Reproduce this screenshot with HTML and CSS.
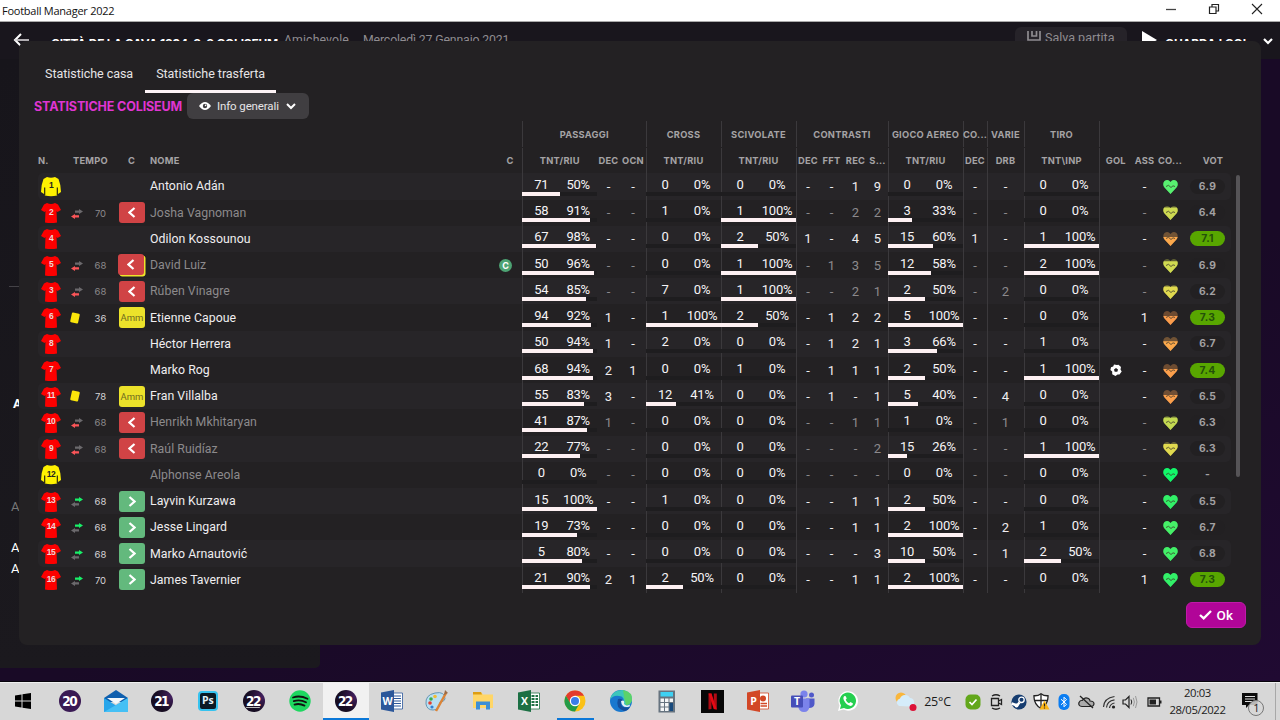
FILE: index.html
```html
<!DOCTYPE html>
<html lang="it">
<head>
    <meta charset="UTF-8">
    <title>Football Manager 2022</title>
    <link rel="stylesheet" href="styles.css">
</head>
<body>

<!-- Shared shapes -->
<svg class="defs" width="0" height="0">
    <symbol id="shirt" viewBox="0 0 20 21">
        <path d="M6 1 Q10 3 14 1 L17 2.5 L20 8 L16.5 10 L15.5 9 L16 20.5 Q10 21.5 4 20.5 L4.5 9 L3.5 10 L0 8 L3 2.5 Z" fill="#fd0000"/>
    </symbol>
    <symbol id="keeper" viewBox="0 0 20 21">
        <path d="M6 1 Q10 2.5 14 1 L17.5 3 Q20 9 20 16 L17 18 L16 19.5 Q10 21 4 19.5 L3 18 L0 16 Q0 9 2.5 3 Z" fill="#fff200"/>
        <path d="M3.7 11.5 V19 M16.3 11.5 V19" stroke="#1b1a10" stroke-width="1.1"/>
    </symbol>
    <symbol id="ball" viewBox="0 0 12 12">
        <path d="M4 .5 L7 1 L8.5 .8 L11 3 L10.5 5.5 L11.7 7.5 L9.5 10.5 L7.5 10.4 L5.5 12 L2.2 10.2 L2.2 7.6 L.4 6 L1 3.2 L3.2 2.6 Z" fill="#fff"/>
        <path d="M6 3.9 L8 5.4 L7.3 7.7 H4.7 L4 5.4 Z" fill="#232123"/>
    </symbol>
</svg>

<div class="titlebar">
    <span>Football Manager 2022</span>
    <div class="window-buttons">
        <svg width="12" height="12"><path d="M1 6.5 H11" stroke="#444" stroke-width="1.3"/></svg>
        <svg width="12" height="12"><path d="M1.5 4 H8 V10.5 H1.5 Z M4 4 V1.5 H10.5 V8 H8" fill="none" stroke="#222" stroke-width="1.2"/></svg>
        <svg width="12" height="12"><path d="M1 1 L11 11 M11 1 L1 11" stroke="#222" stroke-width="1.1"/></svg>
    </div>
</div>

<div class="app">
    <div class="topbar">
        <svg class="back" width="17" height="14"><path d="M8 1 L2 7 L8 13" fill="none" stroke="#fff" stroke-width="2"/><path d="M2 7 H16" stroke="#d8d6d8" stroke-width="1.6"/></svg>
        <span class="match">CITTÀ DE LA CAVA 1394 &nbsp;8-8 COLISEUM</span>
        <span class="info">Amichevole</span>
        <span class="info date">Mercoledì 27 Gennaio 2021</span>
        <div class="save">
            <svg width="14" height="14"><path d="M1 0 V9 H13 V0 M5 0 V5 H9.500 V0" fill="none" stroke="#8f8c90" stroke-width="1.7"/></svg>
            <span>Salva partita</span>
        </div>
        <svg class="play" width="15" height="18"><path d="M0 0 L15 9 L0 18 Z" fill="#fff"/></svg>
        <span class="watch">GUARDA I GOL</span>
        <svg class="more" width="10" height="7"><path d="M1 1 L5 5 L9 1" fill="none" stroke="#fff" stroke-width="2.2"/></svg>
    </div>
    <div class="side-panel">
        <hr>
        <p class="strong">A</p>
        <p class="muted">A</p>
        <p>A</p>
        <p>A</p>
    </div>

    <div class="modal">
        <div class="tabs">
            <span class="tab">Statistiche casa</span>
            <span class="tab active">Statistiche trasferta</span>
        </div>
        <div class="toolbar">
            <h2>STATISTICHE COLISEUM</h2>
            <div class="view-select">
                <svg width="12" height="8" viewBox="0 0 12 8"><path d="M0 4 Q6 -4 12 4 Q6 12 0 4" fill="#fff"/><circle cx="6" cy="4" r="2.2" fill="#403e41"/><circle cx="6.6" cy="3.4" r=".8" fill="#fff"/></svg>
                <span>Info generali</span>
                <svg width="10" height="7"><path d="M1 1 L5 5 L9 1" fill="none" stroke="#fff" stroke-width="2"/></svg>
            </div>
        </div>

        <div class="stats">
            <div class="grid groups">
                <span class="blank"></span>
                <span class="span3 line">PASSAGGI</span>
                <span class="line">CROSS</span>
                <span class="line">SCIVOLATE</span>
                <span class="span4 line">CONTRASTI</span>
                <span class="line">GIOCO AEREO</span>
                <span class="line">CO...</span>
                <span class="line">VARIE</span>
                <span class="line">TIRO</span>
                <span class="span4 line"></span>
            </div>
            <div class="grid heads">
                <span class="left">N.</span>
                <span class="tempo">TEMPO</span>
                <span>C</span>
                <span class="left">NOME</span>
                <span class="cap">C</span>
                <span class="line">TNT/RIU</span><span>DEC</span><span>OCN</span>
                <span class="line">TNT/RIU</span>
                <span class="line">TNT/RIU</span>
                <span class="line">DEC</span><span>FFT</span><span>REC</span><span>S...</span>
                <span class="line">TNT/RIU</span>
                <span class="line">DEC</span>
                <span class="line">DRB</span>
                <span class="line">TNT\INP</span>
                <span class="line">GOL</span><span>ASS</span><span>CO...</span><span class="vote">VOT</span>
            </div>
            <div id="rows"></div>
            <div class="scrollbar"></div>
        </div>

        <button class="ok">
            <svg width="13" height="10"><path d="M1 5 L4.7 8.4 L12 1" fill="none" stroke="#fff" stroke-width="2.3"/></svg>
            Ok
        </button>
    </div>
</div>

<div class="taskbar">
    <div class="task start"><svg width="16" height="16"><path d="M0 2.5 L6.5 1.5 V7.5 H0 Z M7.5 1.3 L16 0 V7.5 H7.5 Z M0 8.5 H6.5 V14.5 L0 13.5 Z M7.5 8.5 H16 V16 L7.5 14.7 Z" fill="#000"/></svg></div>
    <div class="task"><span class="fm fm20">20</span></div>
    <div class="task"><svg width="24" height="22"><path d="M0 8 L12 0 L24 8 V12 H0 Z" fill="#0f5fae"/><path d="M0 8 L12 15.5 L24 8 V22 H0 Z" fill="#27a5ea"/><path d="M0 22 L24 8 V22 Z" fill="#45c0f5"/><path d="M3 8 H21 L12 14 Z" fill="#f4f8fb"/></svg></div>
    <div class="task"><span class="fm">21</span></div>
    <div class="task"><span class="ps">Ps</span></div>
    <div class="task"><span class="fm touch">22</span></div>
    <div class="task"><svg width="22" height="22"><circle cx="11" cy="11" r="10.7" fill="#1ed760"/><path d="M4 7.5 Q11 5 18.5 8.8 M4.8 11.2 Q11 9.2 17 12.3 M5.5 14.6 Q10.5 13 15.5 15.6" fill="none" stroke="#111" stroke-width="1.8" stroke-linecap="round"/></svg></div>
    <div class="task current"><span class="fm">22</span></div>
    <div class="task"><svg width="22" height="22"><path d="M11 3 H21.5 V19 H11 Z" fill="#fff" stroke="#2b579a" stroke-width=".8"/><path d="M13 6 H20 M13 8.5 H20 M13 11 H20 M13 13.5 H20 M13 16 H20" stroke="#2b579a"/><path d="M0 2.5 L13 0 V22 L0 19.5 Z" fill="#2b579a"/><text x="6.5" y="15" class="letter">W</text></svg></div>
    <div class="task"><svg width="24" height="22"><path d="M1 14 Q0 5 10 3 Q20 1 20 9 Q19 12 15 12 Q15 20 8 20 Q2 20 1 14" fill="#b9dff2" stroke="#6596b4"/><circle cx="5" cy="13" r="1.8" fill="#e23c30"/><circle cx="6" cy="9" r="1.8" fill="#3cae4c"/><circle cx="10" cy="6.5" r="1.8" fill="#f3bb33"/><circle cx="7" cy="17" r="1.6" fill="#347fd0"/><path d="M11 21 L21 3" stroke="#dc8437" stroke-width="2.5"/><path d="M19 5 L20 0 L23 3 Z" fill="#9c6b45"/></svg></div>
    <div class="task"><svg width="20" height="18"><path d="M0 0 H8 L10 2.5 H20 V16 H0 Z" fill="#ffd667"/><path d="M0 0 H8 L9 2.5 H0 Z" fill="#dd9d12"/><path d="M3 17.5 V9.5 H17 V17.5 H13 V13 H7 V17.5 Z" fill="#3c8fd6"/></svg></div>
    <div class="task"><svg width="22" height="22"><path d="M11 3 H21.5 V19 H11 Z" fill="#fff" stroke="#217346" stroke-width=".8"/><path d="M13.5 6 H20 M13.5 9 H20 M13.5 12 H20 M13.5 15 H20" stroke="#217346" stroke-width="1.8" stroke-dasharray="3 1"/><path d="M0 2.5 L13 0 V22 L0 19.5 Z" fill="#1c7044"/><text x="6.5" y="15" class="letter">X</text></svg></div>
    <div class="task running"><svg width="22" height="22"><circle cx="11" cy="11" r="10.5" fill="#fbc116"/><path d="M1.9 5.75 A10.5 10.5 0 0 1 20.1 5.75 H11 L6 13 Z" fill="#e33b2e"/><path d="M1.9 5.75 L6.5 13.6 L11 16 L15.5 13.5 L11 21.5 A10.5 10.5 0 0 1 1.9 5.75" fill="#249b48"/><circle cx="11" cy="11" r="5.2" fill="#fff"/><circle cx="11" cy="11" r="4" fill="#3b7de9"/></svg></div>
    <div class="task"><svg width="24" height="24"><circle cx="12" cy="12" r="11" fill="#1978cf"/><path d="M1 11 Q3 1 13 1 Q23 2 23 11 Q22 17 15 16 Q16 7 10 7 Q4 6 1 11" fill="#3cc6bb"/><path d="M14 1 Q24 3 23 11 Q22 16 17 16 Q15 9 14 1" fill="#5bd36a"/><path d="M9 10 Q6 19 15 22 Q19 22 21 18 Q13 20 12 15 Q11 12 14 12 Q13 9 9 10" fill="#154f9d"/><path d="M12 12 Q16 10 15 15 Q17 17.5 21 15.5 L20.5 17.5 Q13 20 12 12" fill="#e8f2f6"/></svg></div>
    <div class="task"><svg width="18" height="23"><rect x=".5" y=".5" width="16.5" height="22" fill="#66737f"/><rect x="2.5" y="2" width="12.5" height="4.5" fill="#3dd1f3"/><path d="M2.5 8.5 H6 V12 H2.5 Z M7 8.5 H10.5 V12 H7 Z M11.5 8.5 H15 V12 H11.5 Z M2.5 13 H6 V16.5 H2.5 Z M7 13 H10.5 V16.5 H7 Z M2.5 17.5 H6 V21 H2.5 Z M7 17.5 H10.5 V21 H7 Z" fill="#f3f5f6"/><rect x="11.5" y="13" width="3.5" height="8" fill="#174a7d"/></svg></div>
    <div class="task app-end"><svg width="23" height="23"><rect width="23" height="23" fill="#070707"/><path d="M7.500 3.5 H10.5 V19 L7.5 19.5 Z M12.8 3.5 H15.8 V19.5 L12.8 19 Z" fill="#b20b14"/><path d="M7.5 3.5 H10.5 L15.8 19.5 L12.8 19 Z" fill="#e50914"/></svg></div>
    <div class="task app-end"><svg width="22" height="22"><path d="M11 3 H21.5 V19 H11 Z" fill="#fff" stroke="#d24726" stroke-width=".8"/><circle cx="16" cy="8.5" r="3" fill="#d24726"/><path d="M13.5 13.5 H20 M13.5 16 H20" stroke="#d24726" stroke-width="1.3"/><path d="M0 2.5 L13 0 V22 L0 19.5 Z" fill="#d24726"/><text x="6.5" y="15" class="letter">P</text></svg></div>
    <div class="task app-end"><svg width="24" height="22"><circle cx="13" cy="4" r="3.6" fill="#7b83eb"/><circle cx="20.5" cy="5" r="2.5" fill="#5059c9"/><path d="M15 8.5 H23.5 V14 Q23 18 18 18 Z" fill="#5059c9"/><path d="M7 8.5 H18.5 V16 Q18 22 13 22 Q8 22 7 16 Z" fill="#7b83eb"/><rect y="5.5" width="12" height="12" rx="1" fill="#464eb8"/><text x="6" y="15" class="letter">T</text></svg></div>
    <div class="task app-end"><svg width="20" height="20"><path d="M0 20 L1.5 14.5 A9.8 9.8 0 1 1 5.5 18.6 Z" fill="#fff"/><path d="M2 18 L3 14.3 A8.2 8.2 0 1 1 6 17 Z" fill="#25cf50"/><path d="M6.5 5 Q4.5 6.5 6 9.5 Q8.5 14 12.5 15 Q15 14.5 15 12.5 L12.5 11 L11 12.2 Q8.5 11 7.7 8.7 L8.7 7.6 L7.8 5.2 Z" fill="#fff"/></svg></div>

    <div class="weather">
        <svg width="22" height="20"><circle cx="6" cy="6" r="5.5" fill="#f9b63c"/><path d="M4 14 A4 4 0 0 1 5 6.5 A5.5 5.5 0 0 1 15 6 A4.2 4.2 0 0 1 15 14.5 Z" fill="#d5ecfa"/><circle cx="18" cy="15.5" r="3.5" fill="#dc1238"/></svg>
        <span>25°C</span>
    </div>
    <div class="tray">
        <svg width="16" height="16"><rect x=".5" y=".5" width="15" height="15" rx="5" fill="#62a71b"/><path d="M4.5 8 L7 10.5 L11.5 5.5" fill="none" stroke="#fff" stroke-width="1.7"/></svg>
        <svg width="16" height="16"><path d="M3.5 4.5 H10.5 V11.5 H3.5 Z M10.5 7 L13.5 5.5 V10.5 L10.5 9 M4 2 Q8 -.5 12 2 M4 14 Q8 16.5 12 14" fill="none" stroke="#222" stroke-width="1.3"/></svg>
        <svg width="16" height="16"><circle cx="8" cy="8" r="7.6" fill="#163d70"/><circle cx="10.5" cy="5.8" r="2.7" fill="#163d70" stroke="#fff" stroke-width="1.3"/><path d="M.7 9.5 L6 11.5 L8.5 8.5" fill="none" stroke="#fff" stroke-width="2.5"/><circle cx="5.5" cy="11.5" r="2" fill="#fff"/></svg>
        <svg width="17" height="17"><path d="M8 .7 Q11 3 15 2.7 Q15.5 11 8 15.5 Q.5 11 1 2.7 Q5 3 8 .7 Z" fill="#fff" stroke="#222" stroke-width="1.3"/><path d="M8 1 V15 M1 7.5 H15" stroke="#222" stroke-width="1.3"/><path d="M11.5 7.5 L16.5 16.5 H6.5 Z" fill="#fcb514"/><path d="M11.5 10.5 V13.5 M11.5 14.5 V15.5" stroke="#222" stroke-width="1.2"/></svg>
        <svg width="12" height="16"><rect x=".5" width="11" height="16" rx="5" fill="#0a7df2"/><path d="M3 5.2 L8.5 10.3 L6 12.8 V3.2 L8.5 5.7 L3 10.8" fill="none" stroke="#fff"/></svg>
        <svg width="17" height="14"><path d="M4 11.5 Q0 11 1 7.5 Q2 5 4.5 5.3 Q6.5 1.5 10.5 3.5 Q12 4.5 12 6 Q16 6 16 9 Q15.5 11.5 13 11.5 Z" fill="#aaa" stroke="#222" stroke-width="1.2"/><path d="M2 1 L15 13" stroke="#222" stroke-width="1.3"/></svg>
        <svg width="14" height="14"><path d="M1.5 12 Q2 3 12.5 1.5 M4.5 12.5 Q5 6 12.5 4.8 M7.5 13 Q8 9 12.5 8" fill="none" stroke="#333" stroke-width="1.2"/><circle cx="11.5" cy="12" r="1.6" fill="#222"/></svg>
        <svg class="volume" width="16" height="14"><path d="M1 5 H3.5 L7 1.5 V12.5 L3.5 9 H1 Z" fill="none" stroke="#222" stroke-width="1.2"/><path d="M9 4.5 Q10.5 7 9 9.5" fill="none" stroke="#222"/><path d="M11.3 2.8 Q13.5 7 11.3 11.2 M13.5 1 Q16.5 7 13.5 13" fill="none" stroke="#999"/></svg>
        <svg width="15" height="10"><path d="M1 1 H12.5 V9 H1 Z" fill="none" stroke="#222" stroke-width="1.3"/><path d="M2.5 2.5 H9 V7.5 H2.5 Z M13 3.5 H14.5 V6.5 H13 Z" fill="#222"/></svg>
    </div>
    <div class="clock">20:03<br>28/05/2022</div>
    <div class="notify">
        <svg width="16" height="16"><path d="M0 0 H15.5 V12 H7 L4 15 V12 H0 Z" fill="#0b0b0b"/><path d="M3 3.5 H13 M3 6 H13 M3 8.5 H10" stroke="#ddd"/></svg>
        <span>1</span>
    </div>
</div>

<script src="script.js"></script>
</body>
</html>
```
FILE: styles.css
```css
* {
    box-sizing: border-box;
}

body {
    margin: 0;
    width: 1280px;
    height: 720px;
    overflow: hidden;
    background: #190a26;
    color: #fff;
    font-family: Roboto, 'Liberation Sans', sans-serif;
    font-size: 12.5px;
}

svg {
    display: block;
    flex: none;
}

.defs {
    position: absolute;
}

/* Window title */
.titlebar {
    height: 22px;
    display: flex;
    justify-content: space-between;
    align-items: center;
    padding: 0 17px 1px 2px;
    background: #fff;
    border-bottom: 1px solid #aaa;
    color: #111;
    font: 11px 'Open Sans', sans-serif;
    letter-spacing: -0.25px;
}

.window-buttons {
    display: flex;
    gap: 31px;
    padding-bottom: 2px;
}

/* Match screen behind the dialog */
.app {
    position: relative;
    height: 660px;
    background: linear-gradient(160deg, #190a26 60%, #200a32);
    border-bottom: 1px solid #07030b;
}

.topbar {
    height: 37px;
    display: flex;
    align-items: flex-start;
    padding: 11px 7px 0 13px;
    background: #19161d;
    white-space: nowrap;
    overflow: hidden;
}

.match {
    width: 228px;
    margin: 2px 0 0 21px;
    font: bold 12px/18px Inter, sans-serif;
    letter-spacing: -0.22px;
}

.info {
    width: 79px;
    margin-left: 5px;
    color: #8f8c90;
    font-size: 12.3px;
    line-height: 15px;
    letter-spacing: 0.1px;
}

.info.date {
    margin-left: 0;
    width: 160px;
    letter-spacing: -0.15px;
}

.save {
    display: flex;
    gap: 4px;
    width: 112px;
    height: 30px;
    margin: -6px 15px 0 auto;
    padding: 4px 0 0 12px;
    border-radius: 6px;
    background: #262329;
    color: #8f8c90;
    line-height: 14px;
    letter-spacing: 0;
}

.play {
    margin-top: -2px;
}

.watch {
    width: 84px;
    margin: 2px 14px 0 8px;
    font: bold 12px/18px Inter, sans-serif;
    overflow: hidden;
    letter-spacing: -0.1px;
}

.more {
    margin-top: 5px;
}

.side-panel {
    width: 320px;
    height: 609px;
    padding: 227px 0 0 9px;
    background: linear-gradient(#17151b, #1b191e);
    border-radius: 0 0 5px 0;
}

.side-panel hr {
    margin: 0 0 109px;
    border: 0;
    border-top: 1px solid #444247;
}

.side-panel p {
    margin: 0 0 6px 2px;
    line-height: 15px;
    font-size: 13px;
}

.side-panel .strong {
    margin: 0 0 88px 4px;
    font-weight: bold;
}

.side-panel .muted {
    margin-bottom: 26px;
    color: #777;
}

/* Dialog */
.modal {
    position: absolute;
    left: 19px;
    top: 18.5px;
    width: 1242px;
    height: 604.5px;
    padding: 15.5px 0 0 15px;
    background: #232123;
    border-radius: 8px;
}

.tabs {
    display: flex;
    height: 37px;
}

.tab {
    padding: 10px 11px 0;
    line-height: 16px;
    letter-spacing: -0.04px;
    color: #e6e4e6;
}

.tab.active {
    margin-left: 1px;
    border-bottom: 3px solid #fdf3f6;
}

.toolbar {
    display: flex;
    align-items: center;
    height: 26px;
}

h2 {
    width: 149px;
    margin: 1px 4px 0 0;
    color: #e035d2;
    font: bold 12.5px Inter, sans-serif;
    letter-spacing: -0.13px;
    white-space: nowrap;
}

.view-select {
    display: flex;
    align-items: center;
    gap: 6px;
    width: 122px;
    height: 26px;
    padding-left: 12px;
    border-radius: 6px;
    background: #403e41;
    color: #e6e4e6;
    font-size: 11.5px;
    letter-spacing: -0.12px;
    white-space: nowrap;
}

.view-select svg:last-child {
    margin-left: 1px;
}

/* Stats table */
.stats {
    position: relative;
    width: 1197px;
    padding-left: 4px;
    margin-top: 2px;
}

.grid {
    display: grid;
    grid-template-columns: 26px 26px 23px 37px 340px 32px 74.5px 24px 25px 75px 75px 24px 24px 24px 20px 75px 24px 37px 75px 33.5px 25px 26px 48px;
}

.grid > * {
    display: flex;
    align-items: center;
    justify-content: center;
}

.grid .line {
    border-left: 1px solid #3b393c;
}

.groups,
.heads {
    height: 26.2px;
    font: bold 9.3px Inter, sans-serif;
    letter-spacing: 0.25px;
    color: #a5a3a5;
    white-space: nowrap;
}

.heads {
    padding-top: 1px;
}

.blank {
    grid-column: span 6;
}

.span3 {
    grid-column: span 3;
}

.span4 {
    grid-column: span 4;
}

.heads .tempo {
    grid-column: span 2;
    padding-left: 4px;
}

.heads .cap {
    padding-left: 8px;
}

.heads .vote {
    padding-left: 12px;
}

.grid .left {
    justify-content: flex-start;
}

.row {
    height: 26.22px;
}

.row:nth-child(odd) {
    background: #272528;
    border-radius: 5px;
}

.row > * {
    font-size: 13px;
    color: #f0eef0;
}

.row.off > * {
    color: #8c8a8c;
}

.row .name {
    justify-content: flex-start;
    font-size: 12.3px;
    letter-spacing: 0.04px;
}

.row .time {
    font: 9.5px Inter, sans-serif;
    padding: 1px 2px 0 0;
}

.row:not(.off) .time {
    color: #d6d4d6;
}

.kit {
    position: relative;
}

.kit svg {
    margin-left: -1px;
}

.kit b {
    position: absolute;
    top: 7px;
    font: bold 8.5px 'Liberation Sans', sans-serif;
    letter-spacing: -0.5px;
    color: #eed6d6;
}

.kit.gk b {
    color: #222;
}

.swap {
    margin-top: 2px;
}

.swap.on .in {
    fill: #18f068;
}

.swap.on .out,
.swap.off .in {
    fill: #6b696c;
}

.swap.off .out {
    fill: #fb5558;
}

.card {
    width: 8px;
    height: 10px;
    margin-right: 4px;
    border-radius: 1px;
    background: #fbe60a;
    transform: rotate(12deg);
}

.badge {
    width: 26px;
    height: 21px;
    display: flex;
    align-items: center;
    justify-content: center;
    margin-left: 1px;
    border-radius: 3px;
}

.badge.out {
    background: #d04345;
}

.badge.booked {
    margin-left: -1px;
    margin-top: -1px;
    box-shadow: 1.5px 1.5px #f0e32a;
}

.badge.in {
    background: #63b97d;
}

.badge.amm {
    background: #ece22a;
    color: #6f6a20;
    font-size: 9.5px;
}

.captain {
    width: 13px;
    height: 13px;
    margin-right: 1px;
    border-radius: 50%;
    background: #4da373;
    color: #fff;
    font: bold 9px/13px Inter, sans-serif;
    text-align: center;
}

.ratio {
    position: relative;
}

.row .ratio {
    padding-bottom: 4px;
    color: #f6f4f6;
    letter-spacing: -0.25px;
}

.ratio span {
    width: 50%;
    text-align: center;
}

.bar {
    position: absolute;
    left: -1px;
    bottom: 3.6px;
    width: 75px;
    height: 4px;
    background: #1e1d1f;
}

.bar i {
    display: block;
    height: 100%;
    background: #fdf0f2;
}

.rating {
    width: 35px;
    height: 15px;
    margin-left: 1px;
    border-radius: 8px;
    background: #222022;
    color: #a3a1a3;
    font: bold 10.3px/15px Inter, sans-serif;
    letter-spacing: 0.3px;
    text-align: center;
}

.rating.good {
    background: #58a600;
    color: #24510a;
}

.rating.none {
    background: none;
}

.scrollbar {
    position: absolute;
    right: -9px;
    top: 54px;
    width: 4px;
    height: 302px;
    border-radius: 2px;
    background: #565457;
}

.ok {
    display: flex;
    align-items: center;
    justify-content: center;
    gap: 5px;
    width: 60px;
    height: 26px;
    margin: 9px 15px 0 auto;
    padding: 0;
    border: 1px solid #c01aa8;
    border-radius: 6px;
    background: #b10598;
    color: #fff;
    font: 500 13.5px Roboto, sans-serif;
    letter-spacing: 0.3px;
}

/* Windows taskbar */
.taskbar {
    display: flex;
    height: 38px;
    background: #d7d7d7;
    border-top: 1px solid #efefef;
    color: #1b1b1b;
    font-family: 'Open Sans', sans-serif;
}

.task {
    flex: none;
    display: flex;
    align-items: center;
    justify-content: center;
    width: 45.95px;
    border-bottom: 2px solid transparent;
    padding-top: 1px;
}

.task.start {
    width: 47px;
    padding-right: 2px;
}

.task.app-end {
    width: 45px;
}

.task.current {
    background: #f1f1f1;
    border-color: #0b78d8;
}

.task.running {
    background: linear-gradient(#0b78d8, #0b78d8) bottom / 37px 2px no-repeat border-box;
}

.letter {
    fill: #fff;
    font: bold 10.5px 'Open Sans', sans-serif;
    text-anchor: middle;
}

.fm {
    width: 22px;
    height: 22px;
    border-radius: 50%;
    background: radial-gradient(circle at 90% 30%, #43205f, #170d22 60%);
    color: #fff;
    font: bold 13.5px/22px 'DejaVu Sans Condensed', Roboto, sans-serif;
    letter-spacing: -1.6px;
    padding-right: 1.5px;
    text-align: center;
}

.fm20 {
    background: #3a1a54;
}

.fm.touch {
    text-decoration: underline 1px #bbb;
}

.ps {
    width: 20px;
    height: 20px;
    border: 2px solid #36c3ef;
    border-radius: 4px;
    background: #0a1a25;
    color: #e4f3fa;
    font: bold 10.5px/15px 'Open Sans', sans-serif;
    text-align: center;
}

.weather {
    display: flex;
    align-items: center;
    gap: 7px;
    width: 67px;
    margin-left: 25px;
    font-size: 12.5px;
    letter-spacing: -0.2px;
}

.tray {
    display: grid;
    grid-template-columns: repeat(9, 22.6px);
    align-items: center;
    justify-items: center;
}

.tray .volume {
    margin-left: -3px;
}

.clock {
    width: 66px;
    margin-left: -1px;
    padding-top: 1px;
    font-size: 11.3px;
    line-height: 17px;
    letter-spacing: -0.4px;
    text-align: center;
}

.notify {
    position: relative;
    width: 46px;
    padding: 10px 0 0 12px;
    border-right: 1px solid #a8a8a8;
}

.notify span {
    position: absolute;
    left: 18px;
    top: 17px;
    width: 16px;
    height: 16px;
    border: 1px solid #777;
    border-radius: 50%;
    background: rgba(215, 215, 215, 0.85);
    font-size: 11px;
    line-height: 14px;
    text-align: center;
}
```
FILE: script.js
```js
// number | status | minute | name | stats | condition colour | condition level | rating
// status: off = subbed out, on = subbed in, card = booked, bench = unused
// stats: pass%, dec, ocn, cross%, tackle%, dec, fft, rec, s, air%, dec, drb, shot%, gol, ass
const players = [
    ['1', '', '', 'Antonio Adán', '71/50 - - 0/0 0/0 - - 1 9 0/0 - - 0/0 . -', '#58f070', 1, '6.9'],
    ['2', 'off', 70, 'Josha Vagnoman', '58/91 - - 1/0 1/100 - - 2 2 3/33 - - 0/0 . -', '#cdd951', .83, '6.4'],
    ['4', '', '', 'Odilon Kossounou', '67/98 - - 0/0 2/50 1 - 4 5 15/60 1 - 1/100 . -', '#fba84c', .6, '7.1'],
    ['5', 'off', 68, 'David Luiz', '50/96 - - 0/0 1/100 - 1 3 5 12/58 - - 2/100 . -', '#d0db51', .78, '6.9'],
    ['3', 'off', 68, 'Rúben Vinagre', '54/85 - - 7/0 1/100 - - 2 1 2/50 - 2 0/0 . -', '#e0d94f', .83, '6.2'],
    ['6', 'card', 36, 'Etienne Capoue', '94/92 1 - 1/100 2/50 - 1 2 2 5/100 - - 0/0 . 1', '#fb9c4c', .6, '7.3'],
    ['8', '', '', 'Héctor Herrera', '50/94 1 - 2/0 0/0 - 1 2 1 3/66 - - 1/0 . -', '#fba84c', .65, '6.7'],
    ['7', '', '', 'Marko Rog', '68/94 2 1 0/0 1/0 - 1 1 1 2/50 - - 1/100 G -', '#fb9f4c', .6, '7.4'],
    ['11', 'card', 78, 'Fran Villalba', '55/83 3 - 12/41 0/0 - 1 - 1 5/40 - 4 0/0 . -', '#fb9f4c', .6, '6.5'],
    ['10', 'off', 68, 'Henrikh Mkhitaryan', '41/87 1 - 0/0 0/0 - - 1 1 1/0 - 1 0/0 . -', '#c3d951', .83, '6.3'],
    ['9', 'off', 68, 'Raúl Ruidíaz', '22/77 - - 0/0 0/0 - - - 2 15/26 - - 1/100 . -', '#e0d94f', .8, '6.3'],
    ['12', 'bench', '', 'Alphonse Areola', '0/0 - - 0/0 0/0 - - - - 0/0 - - 0/0 . -', '#12f86a', 1, '-'],
    ['13', 'on', 68, 'Layvin Kurzawa', '15/100 - - 1/0 0/0 - - 1 1 2/50 - - 0/0 . -', '#32f068', 1, '6.5'],
    ['14', 'on', 68, 'Jesse Lingard', '19/73 - - 0/0 0/0 - - 1 1 2/100 - 2 1/0 . -', '#46f068', 1, '6.7'],
    ['15', 'on', 68, 'Marko Arnautović', '5/80 - - 0/0 0/0 - - - 3 10/50 - 1 2/50 . -', '#42f068', 1, '6.8'],
    ['16', 'on', 70, 'James Tavernier', '21/90 2 1 2/50 0/0 - - 1 1 2/100 - - 0/0 . 1', '#32f068', 1, '7.3']
];

const heartPath = 'M7.5 15 L1.5 8.5 Q-1 5 1.5 2 Q5 -.5 7.5 3 Q10 -.5 13.5 2 Q16 5 13.5 8.5 Z';

// columns that open a new group
const lines = [0, 3, 4, 5, 9, 10, 11, 12, 13];

function chevron(d) {
    return `<svg width="8" height="11"><path d="${d}" fill="none" stroke="#fff" stroke-width="2.2"/></svg>`;
}

function eventIcon(status) {
    if (status === 'card') return '<i class="card"></i>';
    if (status === 'on' || status === 'off') {
        return `<svg class="swap ${status}" width="12" height="10">
            <path class="in" d="M4 1.5 H8 V0 L12 2.5 L8 5 V3.7 H4 Z"/>
            <path class="out" d="M8 6.3 H4 V5 L0 7.5 L4 10 V8.500 H8 Z"/></svg>`;
    }
    return '';
}

function badge(status, name) {
    if (status === 'card') return '<span class="badge amm">Amm</span>';
    if (status === 'on') return `<span class="badge in">${chevron('M1.5 1 L6.5 5.5 L1.5 10')}</span>`;
    if (status === 'off') {
        const booked = name === 'David Luiz' ? ' booked' : '';
        return `<span class="badge out${booked}">${chevron('M6.5 1 L1.5 5.5 L6.5 10')}</span>`;
    }
    return '';
}

function heart(colour, level, i) {
    const top = 15 * (1 - level);
    return `<svg width="15" height="15">
        <clipPath id="lvl${i}"><rect y="${top}" width="15" height="15"/></clipPath>
        <path d="${heartPath}" fill="${colour}" opacity=".35"/>
        <path d="${heartPath}" fill="${colour}" clip-path="url(#lvl${i})"/>
        <path d="M3 7.5 L5.500 6.300 L8 8.500 L10 6.800 L12 7.500" fill="none" stroke="#3d3a2c" stroke-width=".8"/></svg>`;
}

function statCell(value, i) {
    const line = lines.includes(i) ? 'line' : '';
    if (value.includes('/')) {
        const [total, pct] = value.split('/');
        return `<div class="ratio ${line}"><span>${total}</span><span>${pct}%</span>
            <div class="bar"><i style="width:${pct}%"></i></div></div>`;
    }
    if (value === 'G') return `<div class="${line}"><svg width="12" height="12"><use href="#ball"/></svg></div>`;
    return `<div class="${line}">${value === '.' ? '' : value}</div>`;
}

document.getElementById('rows').innerHTML = players.map((p, i) => {
    const [num, status, minute, name, stats, colour, level, vote] = p;
    const keeper = num === '1' || num === '12';
    const dim = status === 'off' || status === 'bench' ? ' off' : '';
    const tone = vote === '-' ? ' none' : vote >= 7 ? ' good' : '';
    return `<div class="grid row${dim}">
        <div class="kit${keeper ? ' gk' : ''}"><svg width="20" height="21"><use href="#${keeper ? 'keeper' : 'shirt'}"/></svg><b>${num}</b></div>
        <div>${eventIcon(status)}</div>
        <div class="time">${minute}</div>
        <div>${badge(status, name)}</div>
        <div class="name">${name}</div>
        <div>${name === 'David Luiz' ? '<span class="captain">C</span>' : ''}</div>
        ${stats.split(' ').map(statCell).join('')}
        <div>${heart(colour, level, i)}</div>
        <div><span class="rating${tone}">${vote}</span></div>
    </div>`;
}).join('');
```
